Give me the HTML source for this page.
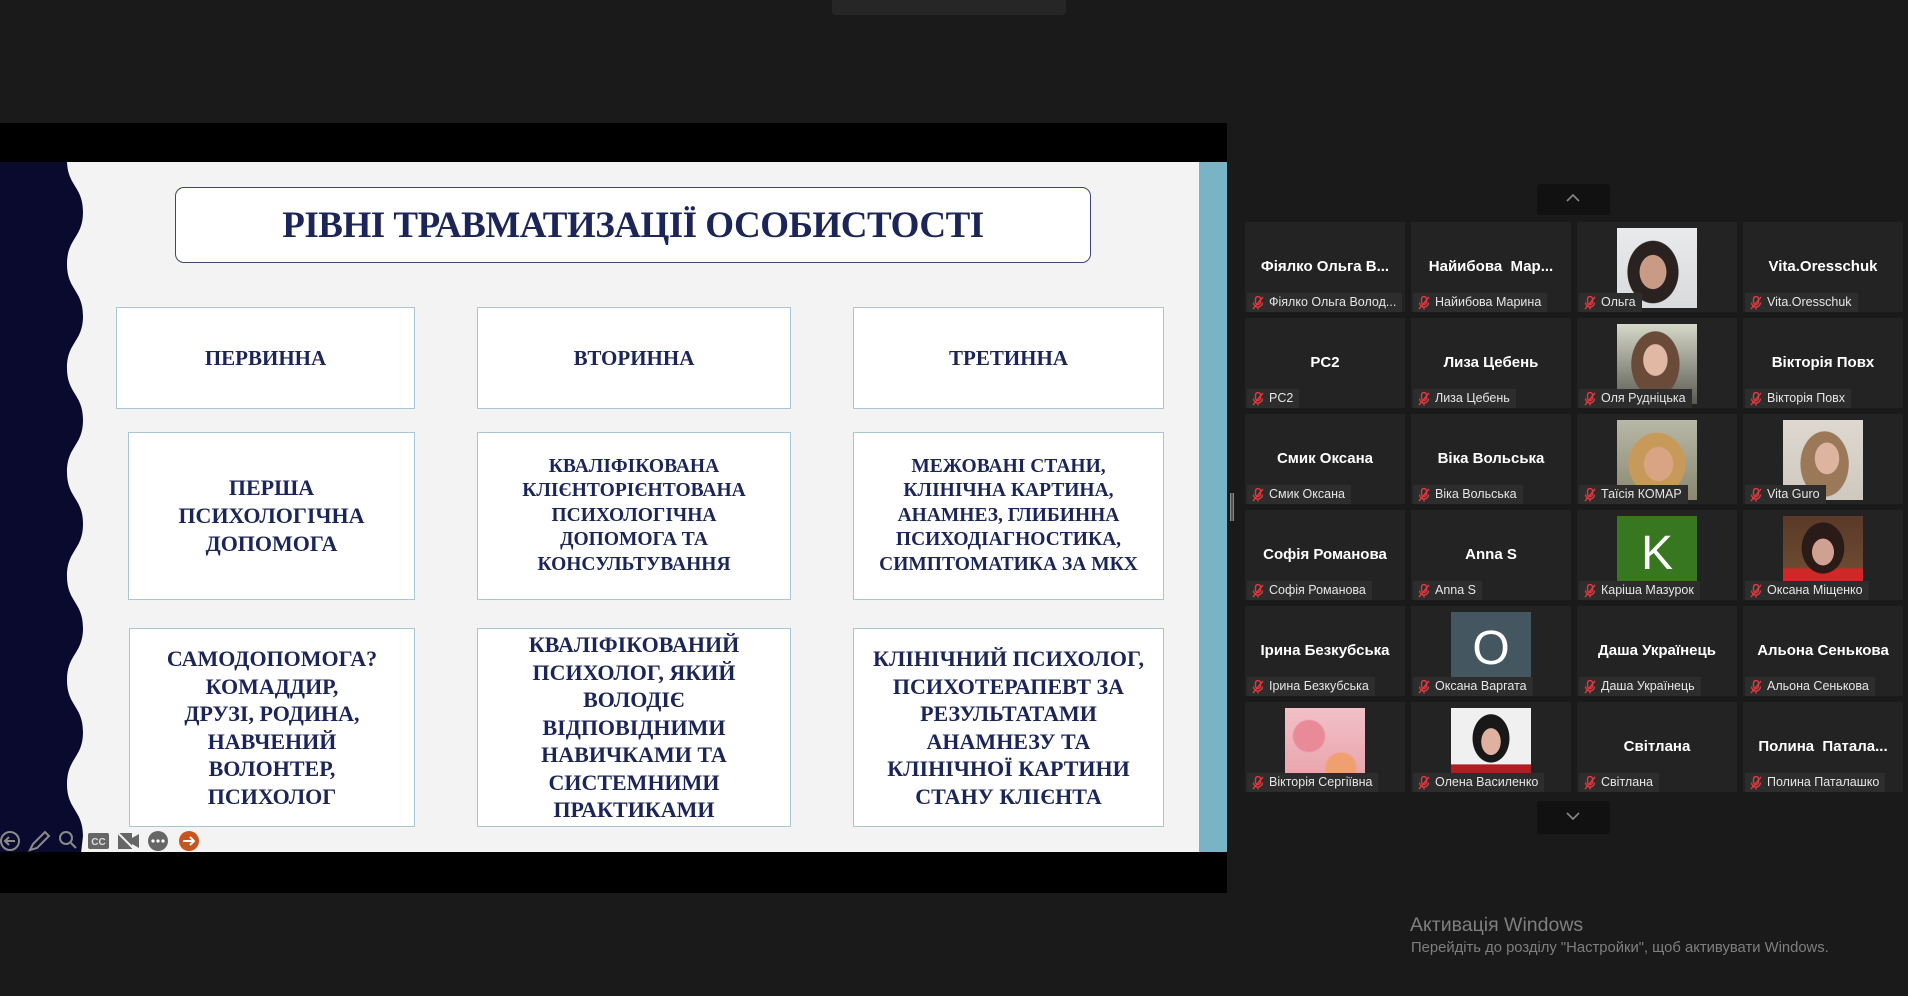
<!DOCTYPE html>
<html><head><meta charset="utf-8">
<style>
*{margin:0;padding:0;box-sizing:border-box}
body{width:1908px;height:996px;background:#1a1a1a;position:relative;overflow:hidden;font-family:"Liberation Sans","DejaVu Sans",sans-serif}
.abs{position:absolute}
.slide{position:absolute;left:0;top:162px;width:1227px;height:690px;background:#f3f3f3;overflow:hidden}
.box{position:absolute;background:#fff;border:1.5px solid #aac6d6;display:flex;align-items:center;justify-content:center;text-align:center;font-family:"Liberation Serif",serif;font-weight:bold;color:#1c2557}
.t{position:absolute;width:160px;height:90px;background:#232323;overflow:hidden}
.nm{position:absolute;left:0;right:0;top:36px;text-align:center;color:#fff;font-weight:bold;font-size:15px;white-space:nowrap}
.lb{position:absolute;left:2px;top:71px;height:19px;background:#2d2d2d;color:#e6e6e6;font-size:12.5px;line-height:19px;padding:0 6px 0 22px;white-space:nowrap}
.lb svg{position:absolute;left:5px;top:3px}
.ph{position:absolute;left:40px;top:6px;width:80px;height:80px}
</style></head><body>
<div class="abs" style="left:832px;top:0;width:234px;height:15px;background:#262626;border-radius:0 0 4px 4px"></div>
<div class="abs" style="left:0;top:123px;width:1227px;height:770px;background:#000"></div>
<div class="slide">
<svg class="abs" style="left:0;top:0" width="100" height="692" viewBox="0 160 100 692">
<path fill="#0a0a2e" d="M0,150 L67,150 L67,158 C67,184 83,184 83,210 C83,236 67,236 67,262 C67,288 83,288 83,314 C83,340 67,340 67,366 C67,392 83,392 83,418 C83,444 67,444 67,470 C67,496 83,496 83,522 C83,548 67,548 67,574 C67,600 83,600 83,626 C83,652 67,652 67,678 C67,704 83,704 83,730 C83,756 67,756 67,782 C67,808 83,808 83,834 L80,860 L0,860Z"/>
</svg>
<div class="abs" style="left:1199px;top:0;width:28px;height:692px;background:#79b3c6"></div>
<div class="abs" style="left:175px;top:25px;width:916px;height:76px;border:1.5px solid #3b4676;border-radius:9px;background:#fff;display:flex;align-items:center;justify-content:center;font-family:'Liberation Serif',serif;font-weight:bold;font-size:37px;color:#1c2557;letter-spacing:-0.5px">РІВНІ ТРАВМАТИЗАЦІЇ ОСОБИСТОСТІ</div>
<div class="box" style="left:116px;top:145px;width:299px;height:102px;font-size:21px">ПЕРВИННА</div>
<div class="box" style="left:477px;top:145px;width:314px;height:102px;font-size:21px">ВТОРИННА</div>
<div class="box" style="left:853px;top:145px;width:311px;height:102px;font-size:21px">ТРЕТИННА</div>
<div class="box" style="left:128px;top:270px;width:287px;height:168px;font-size:22px;line-height:28px">ПЕРША<br>ПСИХОЛОГІЧНА<br>ДОПОМОГА</div>
<div class="box" style="left:477px;top:270px;width:314px;height:168px;font-size:19.5px;line-height:24.5px">КВАЛІФІКОВАНА<br>КЛІЄНТОРІЄНТОВАНА<br>ПСИХОЛОГІЧНА<br>ДОПОМОГА ТА<br>КОНСУЛЬТУВАННЯ</div>
<div class="box" style="left:853px;top:270px;width:311px;height:168px;font-size:19.5px;line-height:24.5px">МЕЖОВАНІ СТАНИ,<br>КЛІНІЧНА КАРТИНА,<br>АНАМНЕЗ, ГЛИБИННА<br>ПСИХОДІАГНОСТИКА,<br>СИМПТОМАТИКА ЗА МКХ</div>
<div class="box" style="left:129px;top:466px;width:286px;height:199px;font-size:22px;line-height:27.5px">САМОДОПОМОГА?<br>КОМАДДИР,<br>ДРУЗІ, РОДИНА,<br>НАВЧЕНИЙ<br>ВОЛОНТЕР,<br>ПСИХОЛОГ</div>
<div class="box" style="left:477px;top:466px;width:314px;height:199px;font-size:22px;line-height:27.5px">КВАЛІФІКОВАНИЙ<br>ПСИХОЛОГ, ЯКИЙ<br>ВОЛОДІЄ<br>ВІДПОВІДНИМИ<br>НАВИЧКАМИ ТА<br>СИСТЕМНИМИ<br>ПРАКТИКАМИ</div>
<div class="box" style="left:853px;top:466px;width:311px;height:199px;font-size:22px;line-height:27.5px">КЛІНІЧНИЙ ПСИХОЛОГ,<br>ПСИХОТЕРАПЕВТ ЗА<br>РЕЗУЛЬТАТАМИ<br>АНАМНЕЗУ ТА<br>КЛІНІЧНОЇ КАРТИНИ<br>СТАНУ КЛІЄНТА</div>
<svg class="abs" style="left:0;top:666px" width="200" height="24" viewBox="0 668 200 24">
<g fill="none" stroke="#8a8a8a" stroke-width="2">
<circle cx="10" cy="681" r="9"/><path d="M15,681H6M9,677L5,681L9,685"/>
<path d="M30,690L33,684L45,672L49,676L37,688Z"/>
<circle cx="66" cy="678" r="6"/><path d="M71,683L76,688"/>
</g>
<rect x="88" y="673" width="21" height="16" rx="2" fill="#666"/><text x="98.5" y="685" font-size="10" font-weight="bold" fill="#ddd" text-anchor="middle" font-family="Liberation Sans">CC</text>
<path d="M118,673H132V689H118Z M132,678L139,674V688L132,684Z" fill="#666"/><path d="M118,673L134,689" stroke="#f3f3f3" stroke-width="2"/>
<circle cx="158" cy="681" r="10" fill="#666"/><circle cx="153" cy="681" r="1.6" fill="#fff"/><circle cx="158" cy="681" r="1.6" fill="#fff"/><circle cx="163" cy="681" r="1.6" fill="#fff"/>
<circle cx="189" cy="681" r="10" fill="#c8541e"/><path d="M183,681H194M190,677L194,681L190,685" stroke="#fff" stroke-width="2" fill="none"/>
</svg>
</div>
<svg class="abs" style="left:1230px;top:493px" width="4" height="28"><rect x="0" y="0" width="1.5" height="28" fill="#888"/><rect x="2.5" y="0" width="1.5" height="28" fill="#888"/></svg>
<div class="abs" style="left:1537px;top:184px;width:73px;height:31px;background:#111;border-radius:3px"></div>
<svg class="abs" style="left:1565px;top:193px" width="16" height="10"><path d="M2,8L8,2L14,8" stroke="#888" stroke-width="1.6" fill="none"/></svg>
<div class="abs" style="left:1537px;top:801px;width:73px;height:33px;background:#111;border-radius:3px"></div>
<svg class="abs" style="left:1565px;top:811px" width="16" height="10"><path d="M2,2L8,8L14,2" stroke="#888" stroke-width="1.6" fill="none"/></svg>

<svg width="0" height="0" style="position:absolute"><defs><g id="m"><rect x="3.5" y="0.5" width="5" height="8" rx="2.5" fill="none" stroke="#e0393e" stroke-width="1.4"/><path d="M1.5,6.5a4.5,4.5 0 0 0 9,0M6,11v2.5M1,13L11,1" stroke="#e0393e" stroke-width="1.4" fill="none"/></g></defs></svg>

<div class="t" style="left:1245px;top:222px"><div class="nm">Фіялко Ольга В...</div><div class="lb"><svg width="12" height="14"><use href="#m"/></svg>Фіялко Ольга Волод...</div></div>
<div class="t" style="left:1411px;top:222px"><div class="nm">Найибова&nbsp; Мар...</div><div class="lb"><svg width="12" height="14"><use href="#m"/></svg>Найибова Марина</div></div>
<div class="t" style="left:1577px;top:222px"><div class="ph" style="background:radial-gradient(ellipse 22px 28px at 45% 55%,#c99a86 60%,transparent 62%),radial-gradient(ellipse 36px 44px at 45% 55%,#2a2220 70%,transparent 72%),linear-gradient(#e8eaec,#d8dadc)"></div><div class="lb"><svg width="12" height="14"><use href="#m"/></svg>Ольга</div></div>
<div class="t" style="left:1743px;top:222px"><div class="nm">Vita.Oresschuk</div><div class="lb"><svg width="12" height="14"><use href="#m"/></svg>Vita.Oresschuk</div></div>
<div class="t" style="left:1245px;top:318px"><div class="nm">PC2</div><div class="lb"><svg width="12" height="14"><use href="#m"/></svg>PC2</div></div>
<div class="t" style="left:1411px;top:318px"><div class="nm">Лиза Цебень</div><div class="lb"><svg width="12" height="14"><use href="#m"/></svg>Лиза Цебень</div></div>
<div class="t" style="left:1577px;top:318px"><div class="ph" style="background:radial-gradient(ellipse 20px 26px at 48% 45%,#e0b8a4 60%,transparent 62%),radial-gradient(ellipse 34px 46px at 48% 50%,#6a4a38 70%,transparent 72%),linear-gradient(#d6d8c8,#5a5a52)"></div><div class="lb"><svg width="12" height="14"><use href="#m"/></svg>Оля Рудніцька</div></div>
<div class="t" style="left:1743px;top:318px"><div class="nm">Вікторія Повх</div><div class="lb"><svg width="12" height="14"><use href="#m"/></svg>Вікторія Повх</div></div>
<div class="t" style="left:1245px;top:414px"><div class="nm">Смик Оксана</div><div class="lb"><svg width="12" height="14"><use href="#m"/></svg>Смик Оксана</div></div>
<div class="t" style="left:1411px;top:414px"><div class="nm">Віка Вольська</div><div class="lb"><svg width="12" height="14"><use href="#m"/></svg>Віка Вольська</div></div>
<div class="t" style="left:1577px;top:414px"><div class="ph" style="background:radial-gradient(ellipse 24px 28px at 52% 55%,#d8a484 60%,transparent 62%),radial-gradient(ellipse 40px 44px at 50% 55%,#c89a5a 70%,transparent 72%),linear-gradient(#b8b8a8,#8a8870)"></div><div class="lb"><svg width="12" height="14"><use href="#m"/></svg>Таїсія КОМАР</div></div>
<div class="t" style="left:1743px;top:414px"><div class="ph" style="background:radial-gradient(ellipse 20px 26px at 55% 48%,#dcb4a0 60%,transparent 62%),radial-gradient(ellipse 34px 46px at 52% 55%,#9a7858 70%,transparent 72%),linear-gradient(#ddd8d0,#cfc8be)"></div><div class="lb"><svg width="12" height="14"><use href="#m"/></svg>Vita Guro</div></div>
<div class="t" style="left:1245px;top:510px"><div class="nm">Софія Романова</div><div class="lb"><svg width="12" height="14"><use href="#m"/></svg>Софія Романова</div></div>
<div class="t" style="left:1411px;top:510px"><div class="nm">Anna S</div><div class="lb"><svg width="12" height="14"><use href="#m"/></svg>Anna S</div></div>
<div class="t" style="left:1577px;top:510px"><div class="ph" style="background:#36771f;color:#fff;font-size:48px;text-align:center;line-height:76px">K</div><div class="lb"><svg width="12" height="14"><use href="#m"/></svg>Каріша Мазурок</div></div>
<div class="t" style="left:1743px;top:510px"><div class="ph" style="background:radial-gradient(ellipse 18px 22px at 50% 45%,#d0a090 60%,transparent 62%),radial-gradient(ellipse 30px 36px at 50% 40%,#2a1a18 70%,transparent 72%),linear-gradient(#5a3a28 0,#6a4a30 65%,#d02828 66%)"></div><div class="lb"><svg width="12" height="14"><use href="#m"/></svg>Оксана Міщенко</div></div>
<div class="t" style="left:1245px;top:606px"><div class="nm">Ірина Безкубська</div><div class="lb"><svg width="12" height="14"><use href="#m"/></svg>Ірина Безкубська</div></div>
<div class="t" style="left:1411px;top:606px"><div class="ph" style="background:#44565f;color:#fff;font-size:48px;text-align:center;line-height:74px">O</div><div class="lb"><svg width="12" height="14"><use href="#m"/></svg>Оксана Варгата</div></div>
<div class="t" style="left:1577px;top:606px"><div class="nm">Даша Українець</div><div class="lb"><svg width="12" height="14"><use href="#m"/></svg>Даша Українець</div></div>
<div class="t" style="left:1743px;top:606px"><div class="nm">Альона Сенькова</div><div class="lb"><svg width="12" height="14"><use href="#m"/></svg>Альона Сенькова</div></div>
<div class="t" style="left:1245px;top:702px"><div class="ph" style="background:radial-gradient(circle at 30% 35%,#e88a98 20%,transparent 22%),radial-gradient(circle at 70% 75%,#f0a070 18%,transparent 20%),linear-gradient(#f2c0c8,#e8a0a8)"></div><div class="lb"><svg width="12" height="14"><use href="#m"/></svg>Вікторія Сергіївна</div></div>
<div class="t" style="left:1411px;top:702px"><div class="ph" style="background:radial-gradient(ellipse 16px 22px at 50% 42%,#e0b0a0 60%,transparent 62%),radial-gradient(ellipse 26px 34px at 50% 38%,#181818 70%,transparent 72%),linear-gradient(#f0f0f0 0,#f0f0f0 70%,#b01e24 71%)"></div><div class="lb"><svg width="12" height="14"><use href="#m"/></svg>Олена Василенко</div></div>
<div class="t" style="left:1577px;top:702px"><div class="nm">Світлана</div><div class="lb"><svg width="12" height="14"><use href="#m"/></svg>Світлана</div></div>
<div class="t" style="left:1743px;top:702px"><div class="nm">Полина&nbsp; Патала...</div><div class="lb"><svg width="12" height="14"><use href="#m"/></svg>Полина Паталашко</div></div>

<div class="abs" style="left:1410px;top:914px;color:#7f7f7f;font-size:19.5px">Активація Windows</div>
<div class="abs" style="left:1411px;top:940px;color:#7f7f7f;font-size:14.8px">Перейдіть до розділу "Настройки", щоб активувати Windows.</div>
</body></html>
